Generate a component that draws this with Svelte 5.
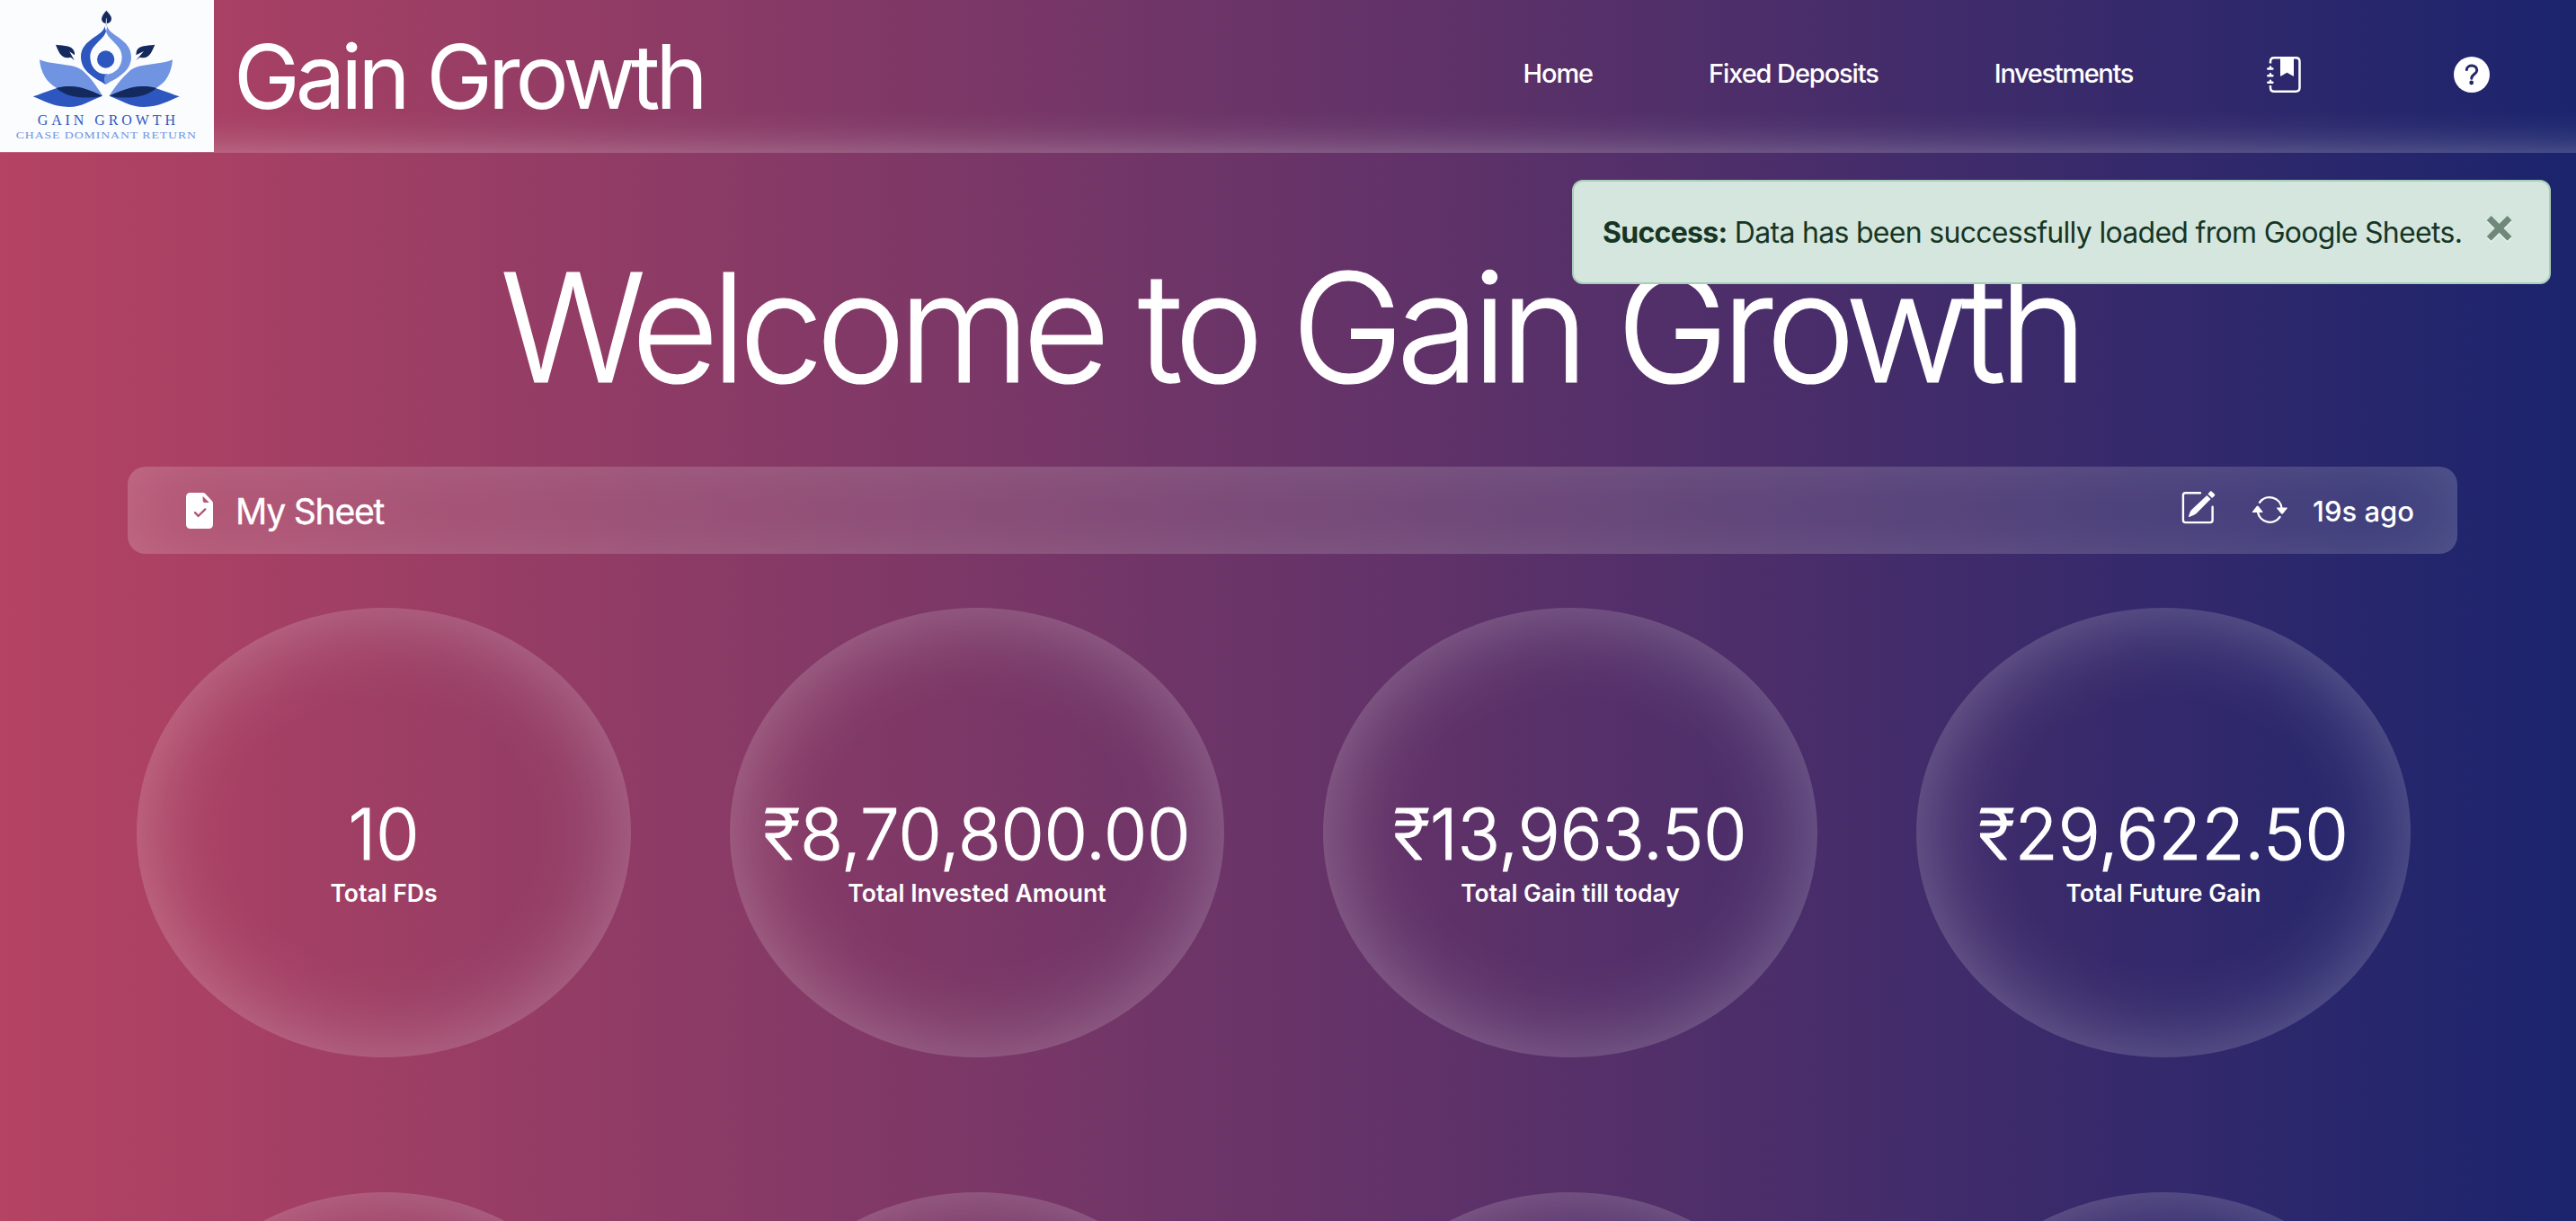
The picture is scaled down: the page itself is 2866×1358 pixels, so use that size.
<script>
  const stats = [
    { value: '10', label: 'Total FDs' },
    { value: '₹8,70,800.00', label: 'Total Invested Amount' },
    { value: '₹13,963.50', label: 'Total Gain till today' },
    { value: '₹29,622.50', label: 'Total Future Gain' }
  ];
  const more = [1, 2, 3, 4];
</script>

<div class="page">
  <header>
    <div class="logo">
      <svg viewBox="0 0 714 507" width="238" height="169">
        <path fill="#142a5e" d="M355 35C366 48 373 54 372 64Q371 76 357 79L355 58L353 79Q340 76 339 64Q339 52 355 35Z" />
        <path stroke="#b8bfd0" stroke-width="3" d="M355 62V88" />
        <path fill="#2d57bf" d="M349 87C350 118 270 130 270 190C270 240 320 262 353 282L357 247C320 250 301 220 301 190C301 150 345 135 354 105Z" />
        <path fill="#7094e2" d="M358 87C362 118 438 130 438 190C438 240 388 262 353 282Q342 262 353 248C388 248 407 220 407 190C407 150 362 135 354 105Z" />
        <circle cx="353" cy="198" r="29" fill="#2d57bf" />
        <path fill="#142a5e" d="M186 149C215 153 244 150 249 176L249 184L232 172L248 201L236 191C205 199 196 174 186 149Z" />
        <path fill="#142a5e" d="M517 149C488 153 458 150 455 176L454 184L480 171L454 201L467 191C498 199 506 174 517 149Z" />
        <path fill="#7094e2" d="M132 199C180 220 245 208 280 239C305 261 325 292 342 319C280 325 220 320 188 293C155 275 135 240 132 199Z" />
        <path fill="#7094e2" d="M576 199C528 220 466 208 430 239C405 261 382 292 365 319C430 325 490 320 522 293C556 275 573 240 576 199Z" />
        <path fill="#2d57bf" d="M110 322C150 310 190 288 230 288C270 288 310 306 342 320C300 335 275 357 230 357C180 357 145 336 110 322Z" />
        <path fill="#2d57bf" d="M599 322C560 310 518 288 478 288C438 288 398 306 365 320C405 335 435 357 480 357C530 357 565 336 599 322Z" />
        <path fill="#142a5e" d="M188 294C250 278 290 297 342 320C290 331 225 328 188 294Z" />
        <path fill="#142a5e" d="M522 294C460 278 418 297 365 320C418 331 485 328 522 294Z" />
        <text x="125" y="416" font-size="48" textLength="460" fill="#2d57bf">GAIN GROWTH</text>
        <text x="53" y="461" font-size="30" textLength="604" lengthAdjust="spacingAndGlyphs" letter-spacing="2" fill="#7094e2">CHASE DOMINANT RETURN</text>
      </svg>
    </div>
    <h1>Gain Growth</h1>
    <nav>
      <a class="home">Home</a>
      <a class="deposits">Fixed Deposits</a>
      <a class="invest">Investments</a>
      <svg class="journal" width="44" height="46" viewBox="0 0 44 46" fill="none" stroke="#fff" stroke-width="2.5">
        <path d="M6 10.5V8.4Q6 4.2 10.2 4.2H34.3Q38.5 4.2 38.5 8.4V37.6Q38.5 41.8 34.3 41.8H10.2Q6 41.8 6 37.6V35" />
        <path fill="#fff" stroke="none" d="M17 4H32V24Q32 25 31 24.5L24.5 20.8L18 24.5Q17 25 17 24Z" />
        <path stroke-linecap="round" d="M3.3 16.5H8.4M3.3 24.2H8.4M3.3 31.8H8.4M6 14.6V16M6 22.2V24M6 29.8V31" />
      </svg>
      <svg class="help" width="40" height="40" viewBox="0 0 40 40" fill="none">
        <circle cx="20" cy="20" r="20" fill="#fff" />
        <path stroke="#27276c" stroke-width="3" stroke-linecap="round" d="M14.3 14.6C14.6 8.5 26 8.4 25.8 15.2C25.6 19.5 19.8 19.6 19.8 24.2" />
        <circle cx="19.7" cy="29" r="2.4" fill="#27276c" />
      </svg>
    </nav>
  </header>

  <main>
    <h2>Welcome to Gain Growth</h2>
    <section class="sheet">
      <svg width="30" height="40" viewBox="0 0 30 40">
        <mask id="cut">
          <rect width="30" height="40" fill="#fff" />
          <path fill="#000" d="M18.6 3.7L25.8 11H21Q18.6 11 18.6 8.5Z" />
          <path fill="none" stroke="#000" stroke-width="2.4" stroke-linecap="round" stroke-linejoin="round" d="M10 22.2L13.6 26L21.3 18.4" />
        </mask>
        <path fill="#fff" mask="url(#cut)" d="M5 0H18.5Q20.3 0 21.5 1.3L29 9.2Q30 10.4 30 12V35Q30 40 25 40H5Q0 40 0 35V5Q0 0 5 0Z" />
      </svg>
      <span class="name">My Sheet</span>
      <svg class="edit" width="40" height="40" viewBox="0 0 40 40">
        <path fill="none" stroke="#fff" stroke-width="2.4" stroke-linecap="round" d="M22 3.2H5.5Q2.9 3.2 2.9 5.8V33.5Q2.9 36.1 5.5 36.1H33Q35.6 36.1 35.6 33.5V18.8" />
        <path fill="#fff" d="M29.3 5.9L33.6 9.9L17.5 26.2Q16.5 27.2 9.6 30Q8.6 30.2 9 29.2Q11 22.8 12 22.2ZM30.4 4.4L33 1.6Q33.8 .9 34.6 1.6L38 4.8Q38.7 5.5 38 6.2L35.2 9Z" />
      </svg>
      <svg class="sync" width="42" height="34" viewBox="0 0 42 34">
        <path fill="none" stroke="#fff" stroke-width="2.4" stroke-linecap="round" d="M9 8.8A13.6 13.6 0 0 1 33.6 15.5M7 19.5A13.6 13.6 0 0 0 31.5 25" />
        <path fill="#fff" d="M28.3 14.5H39.3Q40.2 14.8 39.6 15.6L35 21.3Q34 22.2 33 21.3L28.2 15.6Q27.8 14.8 28.3 14.5ZM12 20H1.3Q.5 19.8 1 19L5.7 13Q6.7 12.2 7.7 13L12.4 19Q12.8 19.8 12 20Z" />
      </svg>
      <span class="ago">19s ago</span>
    </section>
    <section class="grid">
      {#each stats as s}
        <article>
          <strong>{s.value}</strong>
          <span>{s.label}</span>
        </article>
      {/each}
      {#each more as _}
        <article></article>
      {/each}
    </section>
  </main>

  <aside class="toast">
    <p><b>Success:</b> Data has been successfully loaded from Google Sheets.</p>
    <button>×</button>
  </aside>
</div>

<style>
  :global(body) { overflow: hidden; }
  .page {
    position: relative;
    height: 1358px;
    overflow: hidden;
    color: #fff;
    font-family: Inter, 'Liberation Sans', sans-serif;
    background: linear-gradient(to right, #b54363, #1b246d);
  }
  header {
    display: flex;
    height: 170px;
    background: linear-gradient(to top, rgba(255, 255, 255, 0.18), rgba(255, 255, 255, 0.09) 15px, rgba(255, 255, 255, 0.03) 30px, rgba(255, 255, 255, 0) 48px);
  }
  .logo { width: 238px; height: 169px; background: #fbfcfe; }
  .logo svg { display: block; }
  .logo text { font-family: 'Liberation Serif', serif; }
  h1 {
    margin: 0 0 0 22px;
    font-size: 99px;
    font-weight: 400;
    line-height: 170px;
    letter-spacing: -5.1px;
    white-space: nowrap;
  }
  nav { display: flex; margin-left: auto; align-items: center; font-size: 29px; font-weight: 500; letter-spacing: -1.1px; }
  nav a { line-height: 164px; align-self: flex-start; white-space: nowrap; }
  .home { margin-right: 129px; }
  .deposits { margin-right: 129px; }
  .invest { margin-right: 147px; letter-spacing: -1.35px; }
  .journal { margin: -4px 166px 0 0; }
  .help { margin: -4px 96px 0 0; }
  h2 {
    margin: 0;
    height: 349px;
    padding: 94px 0 0 5px;
    box-sizing: border-box;
    text-align: center;
    font-size: 168px;
    font-weight: 300;
    line-height: 200px;
    letter-spacing: -8.2px;
    white-space: nowrap;
    -webkit-text-stroke: 1.2px #fff;
  }
  .sheet {
    display: flex;
    align-items: center;
    margin: 0 132px 0 142px;
    height: 97px;
    padding: 0 48px 0 65px;
    box-sizing: border-box;
    border-radius: 20px;
    background: rgba(255, 255, 255, 0.08);
    box-shadow: inset 0 0 90px rgba(255, 255, 255, 0.18);
  }
  .name { margin: 2px 0 0 25px; font-size: 39px; font-weight: 400; letter-spacing: -1.2px; -webkit-text-stroke: 0.4px #fff; }
  .edit { margin: -5px 39px 0 auto; }
  .sync { margin: -2px 26px 0 0; }
  .ago { margin-top: 1px; font-size: 31px; font-weight: 500; }
  .grid { display: grid; grid-template-columns: repeat(4, 550px); gap: 150px 110px; margin: 60px 0 0 152px; }
  article {
    display: flex;
    flex-direction: column;
    align-items: center;
    height: 500px;
    padding-top: 205px;
    box-sizing: border-box;
    border-radius: 50%;
    box-shadow: inset 0 0 100px rgba(255, 255, 255, 0.3);
  }
  strong { font-size: 78px; font-weight: 300; line-height: 94px; white-space: nowrap; -webkit-text-stroke: 1.2px #fff; }
  article span { font-size: 26.5px; font-weight: 600; line-height: 37px; }
  .toast {
    position: absolute;
    top: 200px;
    right: 28px;
    width: 1089px;
    height: 116px;
    padding: 0 37px 0 32px;
    box-sizing: border-box;
    display: flex;
    align-items: center;
    justify-content: space-between;
    border: 2px solid #a9cfbb;
    border-radius: 12px;
    background: #d4e6dd;
    color: #163524;
    font-size: 32px;
    white-space: nowrap;
  }
  .toast p { margin: 0; letter-spacing: -0.7px; }
  .toast button { margin-bottom: 16px; padding: 0; border: 0; background: none; color: #0c2c1a; opacity: 0.5; font: 700 54px/60px Inter, sans-serif; text-shadow: 0 2px 0 #fff; }
</style>
